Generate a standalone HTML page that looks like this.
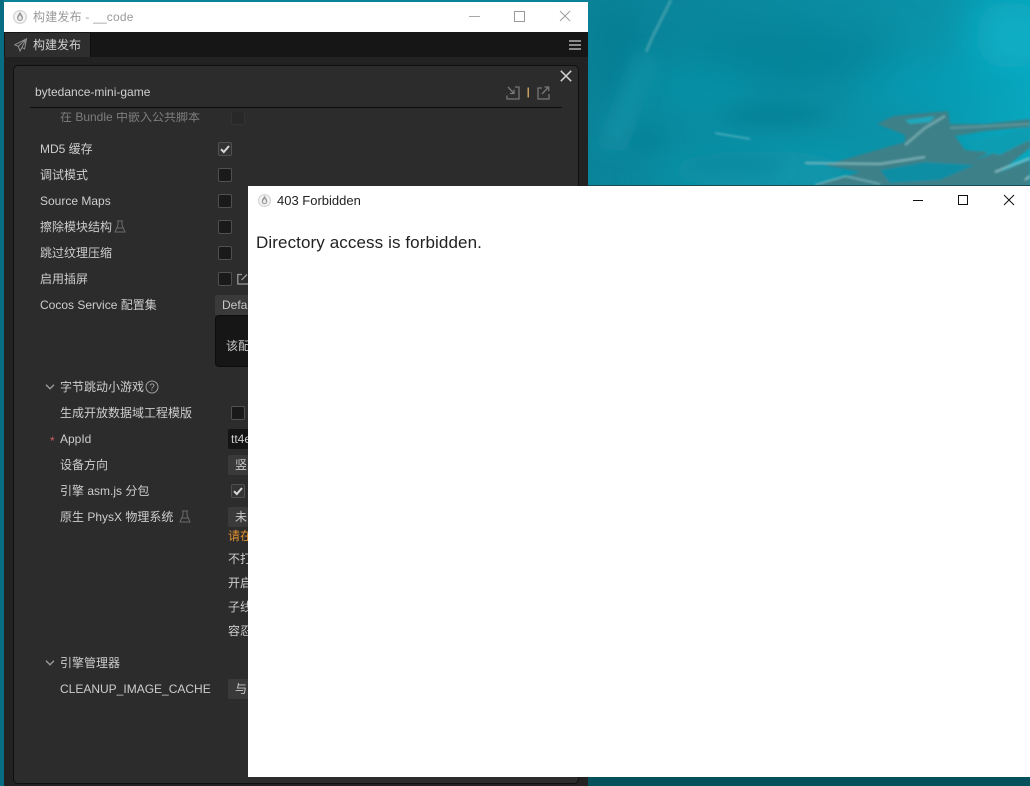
<!DOCTYPE html>
<html><head><meta charset="utf-8">
<style>
html,body{margin:0;padding:0;background:#0a8ea4}
#r{position:relative;width:1030px;height:786px;overflow:hidden;font-family:"Liberation Sans","Noto Sans CJK SC",sans-serif;font-size:12px;color:#cdcdcd}
#r *{box-sizing:border-box}
.a{position:absolute;white-space:nowrap}
.l{position:absolute;white-space:nowrap;line-height:16px;height:16px}
.c{position:absolute;width:14px;height:14px;background:#1a1a1a;border:1px solid #505050;border-radius:2px}
.s{position:absolute;background:#3a3a3a;border-radius:2px;height:20px;line-height:20px;padding-left:7px;color:#c8c8c8;overflow:hidden;white-space:nowrap}
</style></head><body>
<div id="r">
<svg class="a" style="left:0;top:0" width="1030" height="786" viewBox="0 0 1030 786">
<defs>
<linearGradient id="g" x1="588" y1="0" x2="1030" y2="120" gradientUnits="userSpaceOnUse"><stop offset="0" stop-color="#0a8297"/><stop offset=".45" stop-color="#0a8ba1"/><stop offset=".75" stop-color="#0a93a9"/><stop offset="1" stop-color="#08a8bf"/></linearGradient>
<filter id="b1" x="-50%" y="-50%" width="200%" height="200%"><feGaussianBlur stdDeviation="20"/></filter>
<filter id="b2" x="-50%" y="-50%" width="200%" height="200%"><feGaussianBlur stdDeviation="9"/></filter>
<filter id="b3" x="-10%" y="-10%" width="120%" height="120%"><feGaussianBlur stdDeviation="1.1"/></filter>
</defs>
<rect width="1030" height="786" fill="url(#g)"/>
<rect x="0" y="0" width="4" height="786" fill="#066d83"/>
<g filter="url(#b1)">
<ellipse cx="790" cy="55" rx="110" ry="28" fill="#087c92" opacity=".55"/>
<ellipse cx="620" cy="50" rx="25" ry="50" fill="#07788d" opacity=".6"/>
<ellipse cx="1010" cy="35" rx="35" ry="35" fill="#09b4cb" opacity=".8"/>
<ellipse cx="700" cy="90" rx="60" ry="30" fill="#0d9cb2" opacity=".45"/>
<ellipse cx="930" cy="85" rx="70" ry="22" fill="#0ba3bb" opacity=".55"/>
<ellipse cx="760" cy="170" rx="110" ry="20" fill="#0da2b8" opacity=".6"/>
</g>
<g filter="url(#b2)">
<ellipse cx="640" cy="140" rx="28" ry="10" fill="#077e93" opacity=".55"/>
<ellipse cx="735" cy="165" rx="50" ry="8" fill="#077e93" opacity=".5"/>
<ellipse cx="775" cy="115" rx="55" ry="9" fill="#07788d" opacity=".6"/>
<path d="M640 50 L600 150 L620 150 L655 60Z" fill="#2fb0c0" opacity=".3"/>
</g>
<g filter="url(#b3)">
<path d="M671 0 L652 38 L646 52" stroke="#58aab6" stroke-width="3" fill="none" opacity=".65"/>
<path d="M715 133 L750 139" stroke="#7cc6d0" stroke-width="1.300" fill="none" opacity=".8"/>
<path d="M877 124 L893 116 L925 113 L948 111 L950 124 L985 124 L1030 119 L1030 127 L985 131 L955 136 L965 150 L990 152 L975 160 L1030 140 L1030 148 L1000 172 L1030 160 L1030 186 L815 186 L860 172 L825 165 L870 152 L905 142 L905 135 L885 127Z" fill="#3d8088"/>
<path d="M905 120 L935 116 L930 122 L910 124Z" fill="#1fa8bc"/>
<path d="M1000 135 L1030 127 L1030 140 L1000 155 L985 152 L965 142Z" fill="#0f9db2"/>
<path d="M880 170 L925 162 L975 165 L940 180 L890 183Z" fill="#0f8ea4"/>
<path d="M805 163 L880 164 L925 157" stroke="#89bcc2" stroke-width="2" fill="none" opacity=".85"/>
<path d="M905 145 L925 128 L945 116" stroke="#82b6ba" stroke-width="2" fill="none" opacity=".85"/>
<path d="M950 128 L1030 124" stroke="#6fa2a8" stroke-width="1.500" fill="none" opacity=".85"/>
<path d="M995 172 L1030 158 M1025 180 L1030 176" stroke="#98c8cc" stroke-width="2" fill="none" opacity=".85"/>
<path d="M815 185 L845 176 L880 184" stroke="#7db8be" stroke-width="1.500" fill="none" opacity=".85"/>
</g>
<rect x="588" y="185" width="442" height="1" fill="#1d4a50"/>
<rect x="588" y="777" width="442" height="9" fill="#04505b"/>
</svg>

<!-- dark window -->
<div class="a" style="left:4px;top:2px;width:584px;height:784px;background:#222"></div>
<div class="a" style="left:4px;top:2px;width:584px;height:30px;background:#fff"></div>
<svg class="a" style="left:12px;top:9px" width="16" height="16" viewBox="0 0 16 16"><circle cx="8" cy="8" r="7" fill="#d6d6d6"/><circle cx="8" cy="8" r="5.600" fill="#f5f5f5"/><path d="M8 2.800C6.600 5.200 5 6.800 5 9a3 3 0 0 0 6 0C11 6.800 9.400 5.200 8 2.800Z" fill="#9a9a9a"/><path d="M8 6C7.300 7.300 6.400 8.100 6.400 9.200a1.600 1.600 0 0 0 3.200 0C9.600 8.100 8.700 7.300 8 6Z" fill="#f0f0f0"/></svg>
<div class="l" style="left:33px;top:9px;font-size:12px;color:#9a9a9a;letter-spacing:.2px">构建发布 - __code</div>
<div class="a" style="left:469px;top:16px;width:11px;height:1px;background:#a8a8a8"></div>
<div class="a" style="left:514px;top:11px;width:11px;height:11px;border:1px solid #9a9a9a"></div>
<svg class="a" style="left:559px;top:10px" width="12" height="12" viewBox="0 0 12 12"><path d="M1 1L11 11M11 1L1 11" stroke="#a0a0a0" stroke-width="1" fill="none"/></svg>

<div class="a" style="left:4px;top:32px;width:584px;height:25px;background:#161616"></div>
<div class="a" style="left:5px;top:33px;width:86px;height:24px;background:#2e2e2e;border-right:1px solid #0e0e0e"></div>
<svg class="a" style="left:14px;top:38px" width="13" height="14" viewBox="0 0 13 14"><path d="M12.500 .8L.8 6.800L4.300 8.400L6 13L8 9.500L10.600 11ZM12.500 .8L4.300 8.400M12.500 .8L6 13" stroke="#8f8f8f" stroke-width="1" fill="none"/></svg>
<div class="l" style="left:33px;top:37px;color:#cfcfcf">构建发布</div>
<div class="a" style="left:569px;top:40px;width:12px;height:2px;background:#8a8a8a"></div>
<div class="a" style="left:569px;top:44px;width:12px;height:2px;background:#8a8a8a"></div>
<div class="a" style="left:569px;top:48px;width:12px;height:2px;background:#8a8a8a"></div>

<!-- panel -->
<div class="a" style="left:13px;top:65px;width:566px;height:719px;background:#2c2c2c;border:1px solid #0f0f0f;border-radius:5px"></div>
<svg class="a" style="left:560px;top:70px" width="12" height="12" viewBox="0 0 12 12"><path d="M.8 .8L11.200 11.200M11.200 .8L.8 11.200" stroke="#d0d0d0" stroke-width="1.500" fill="none"/></svg>
<div class="l" style="left:35px;top:84px;color:#cfcfcf">bytedance-mini-game</div>
<svg class="a" style="left:506px;top:85px" width="44" height="15" viewBox="0 0 44 15"><path d="M1 10.500V14H13V2H9M2 2L8 8.500M8 4.500V8.500H4" stroke="#777" stroke-width="1.300" fill="none"/><rect x="21.500" y="2.500" width="1.500" height="10" fill="#c8a060"/><path d="M36 3H32V14H43V9M36 9L42 2.500M38.500 2H42.700V6" stroke="#777" stroke-width="1.300" fill="none"/></svg>
<div class="a" style="left:30px;top:107px;width:532px;height:1px;background:#0c0c0c"></div>

<!-- rows -->
<div class="l" style="left:60px;top:109px;color:#7d7d7d">在 Bundle 中嵌入公共脚本</div>
<div class="c" style="left:231px;top:111px;background:#282828;border-color:#333"></div>
<div class="a" style="left:30px;top:108px;width:532px;height:4px;background:#2c2c2c"></div>

<div class="l" style="left:40px;top:141px">MD5 缓存</div>
<div class="c" style="left:218px;top:142px;background:#333"><svg class="a" style="left:1px;top:1px" width="10" height="10" viewBox="0 0 10 10"><path d="M1 5.200L3.800 8L9 2" stroke="#d8d8d8" stroke-width="2" fill="none"/></svg></div>
<div class="l" style="left:40px;top:167px">调试模式</div><div class="c" style="left:218px;top:168px"></div>
<div class="l" style="left:40px;top:193px">Source Maps</div><div class="c" style="left:218px;top:194px"></div>
<div class="l" style="left:40px;top:219px">擦除模块结构</div>
<svg class="a" style="left:114px;top:220px" width="12" height="13" viewBox="0 0 12 13"><path d="M3 1H9M4 1V5L1 12H11L8 5V1M3 8H9" stroke="#6a6a6a" stroke-width="1" fill="none"/></svg>
<div class="c" style="left:218px;top:220px"></div>
<div class="l" style="left:40px;top:245px">跳过纹理压缩</div><div class="c" style="left:218px;top:246px"></div>
<div class="l" style="left:40px;top:271px">启用插屏</div><div class="c" style="left:218px;top:272px"></div>
<svg class="a" style="left:237px;top:273px" width="11" height="12" viewBox="0 0 11 12"><path d="M5 1.500H.8V11H11M4.500 7L10 1.500" stroke="#9a9a9a" stroke-width="1.300" fill="none"/></svg>
<div class="l" style="left:40px;top:297px">Cocos Service 配置集</div>
<div class="s" style="left:215px;top:295px;width:40px;">Defa</div>
<div class="a" style="left:215px;top:315px;width:40px;height:52px;background:#161616;border-radius:4px;border:1px solid #0c0c0c"></div>
<div class="l" style="left:226px;top:338px;color:#c8c8c8;width:22px;overflow:hidden">该配</div>

<svg class="a" style="left:45px;top:383px" width="10" height="8" viewBox="0 0 10 8"><path d="M1 1.800L5 5.800L9 1.800" stroke="#9a9a9a" stroke-width="1.400" fill="none"/></svg>
<div class="l" style="left:60px;top:379px">字节跳动小游戏</div>
<svg class="a" style="left:145px;top:380px" width="14" height="14" viewBox="0 0 14 14"><circle cx="7" cy="7" r="6" stroke="#a0a0a0" stroke-width="1" fill="none"/><text x="7" y="10.500" font-size="10" text-anchor="middle" fill="#a8a8a8" font-family="Liberation Sans">?</text></svg>
<div class="l" style="left:60px;top:405px">生成开放数据域工程模版</div><div class="c" style="left:231px;top:406px"></div>
<div class="l" style="left:50px;top:433px;color:#d06060;font-size:12px">*</div>
<div class="l" style="left:60px;top:431px">AppId</div>
<div class="a" style="left:228px;top:429px;width:20px;height:20px;background:#141414;border-radius:2px 0 0 2px"></div>
<div class="l" style="left:231px;top:431px;width:17px;overflow:hidden">tt4e</div>
<div class="l" style="left:60px;top:457px">设备方向</div>
<div class="s" style="left:228px;top:455px;width:20px;">竖</div>
<div class="l" style="left:60px;top:483px">引擎 asm.js 分包</div>
<div class="c" style="left:231px;top:484px;background:#333"><svg class="a" style="left:1px;top:1px" width="10" height="10" viewBox="0 0 10 10"><path d="M1 5.200L3.800 8L9 2" stroke="#d8d8d8" stroke-width="2" fill="none"/></svg></div>
<div class="l" style="left:60px;top:509px">原生 PhysX 物理系统</div>
<svg class="a" style="left:179px;top:510px" width="12" height="13" viewBox="0 0 12 13"><path d="M3 1H9M4 1V5L1 12H11L8 5V1M3 8H9" stroke="#6a6a6a" stroke-width="1" fill="none"/></svg>
<div class="s" style="left:228px;top:507px;width:20px;">未</div>
<div class="l" style="left:228px;top:528px;color:#e09030;width:20px;overflow:hidden">请在</div>
<div class="l" style="left:228px;top:551px;width:20px;overflow:hidden">不打</div>
<div class="l" style="left:228px;top:575px;width:20px;overflow:hidden">开启</div>
<div class="l" style="left:228px;top:599px;width:20px;overflow:hidden">子线</div>
<div class="l" style="left:228px;top:623px;width:20px;overflow:hidden">容忍</div>
<svg class="a" style="left:45px;top:659px" width="10" height="8" viewBox="0 0 10 8"><path d="M1 1.800L5 5.800L9 1.800" stroke="#9a9a9a" stroke-width="1.400" fill="none"/></svg>
<div class="l" style="left:60px;top:655px">引擎管理器</div>
<div class="l" style="left:60px;top:681px">CLEANUP_IMAGE_CACHE</div>
<div class="s" style="left:228px;top:679px;width:20px;">与</div>

<!-- white window -->
<div class="a" style="left:248px;top:186px;width:782px;height:591px;background:#fff"></div>
<svg class="a" style="left:257px;top:193px" width="15" height="15" viewBox="0 0 16 16"><circle cx="8" cy="8" r="7" fill="#d6d6d6"/><circle cx="8" cy="8" r="5.600" fill="#f5f5f5"/><path d="M8 2.800C6.600 5.200 5 6.800 5 9a3 3 0 0 0 6 0C11 6.800 9.400 5.200 8 2.800Z" fill="#9a9a9a"/><path d="M8 6C7.300 7.300 6.400 8.100 6.400 9.200a1.600 1.600 0 0 0 3.200 0C9.600 8.100 8.700 7.300 8 6Z" fill="#f0f0f0"/></svg>
<div class="l" style="left:277px;top:193px;font-size:13px;color:#222">403 Forbidden</div>
<div class="a" style="left:913px;top:200px;width:10px;height:1px;background:#111"></div>
<div class="a" style="left:958px;top:195px;width:10px;height:10px;border:1px solid #111"></div>
<svg class="a" style="left:1003px;top:194px" width="12" height="12" viewBox="0 0 12 12"><path d="M1 1L11 11M11 1L1 11" stroke="#111" stroke-width="1" fill="none"/></svg>
<div class="l" style="left:256px;top:233px;height:20px;line-height:20px;font-size:17px;color:#222;letter-spacing:.1px">Directory access is forbidden.</div>
</div>
</body></html>
